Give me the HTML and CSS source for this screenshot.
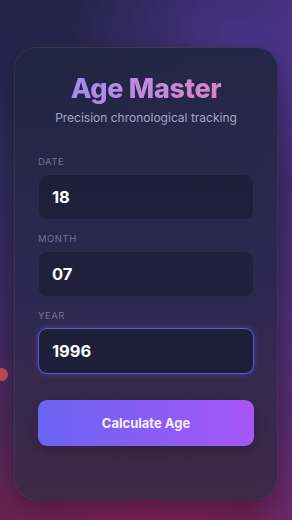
FILE: index.html
```html
<!DOCTYPE html>
<html>
<head>
<meta charset="utf-8">
<link rel="stylesheet" href="styles.css">
</head>
<body>
<div class="dot"></div>
<main class="page">
  <section class="card">
    <h1 class="title">Age Master</h1>
    <p class="subtitle">Precision chronological tracking</p>
    <div class="fields">
      <label class="field">
        <span class="label">Date</span>
        <span class="input">18</span>
      </label>
      <label class="field">
        <span class="label">Month</span>
        <span class="input">07</span>
      </label>
      <label class="field">
        <span class="label">Year</span>
        <span class="input focused">1996</span>
      </label>
    </div>
    <button class="btn">Calculate Age</button>
  </section>
</main>
</body>
</html>
```
FILE: styles.css
```css
html, body { margin: 0; padding: 0; }
body {
  width: 292px;
  height: 520px;
  overflow: hidden;
  position: relative;
  font-family: Inter, "Noto Sans", sans-serif;
  background:
    radial-gradient(ellipse 170px 150px at 240px 40px, rgba(92,64,176,0.6), transparent),
    linear-gradient(90deg, transparent 85%, rgba(110,50,160,0.35) 100%),
    radial-gradient(ellipse 240px 160px at 150px 550px, rgba(130,30,85,0.9), transparent),
    linear-gradient(180deg, #262348 0%, #2e2958 35%, #3a2a60 60%, #58264f 100%);
}
.dot {
  position: absolute;
  left: -5px;
  top: 368px;
  width: 13px;
  height: 13px;
  border-radius: 50%;
  background: #b44a4a;
}
.page {
  padding: 47px 14px 0;
}
.card {
  height: 453px;
  box-sizing: border-box;
  border-radius: 22px;
  background: linear-gradient(180deg, rgba(33,38,66,0.92) 0%, rgba(44,40,78,0.85) 55%, rgba(58,42,70,0.9) 100%);
  border: 1px solid rgba(255,255,255,0.05);
  box-shadow: 0 8px 24px rgba(0,0,0,0.25);
  padding: 26px 23px 0;
  display: flex;
  flex-direction: column;
}
.title {
  margin: 0;
  text-align: center;
  font-size: 27px;
  font-weight: 800;
  line-height: 30px;
  letter-spacing: -0.3px;
  background: linear-gradient(90deg, #9b8cf0 0%, #c08ae0 50%, #e880b8 100%);
  -webkit-background-clip: text;
  background-clip: text;
  color: transparent;
}
.subtitle {
  margin: 6px 0 0;
  text-align: center;
  font-size: 12px;
  color: #a3a6c6;
  line-height: 16px;
}
.fields {
  margin-top: 29px;
  display: flex;
  flex-direction: column;
  gap: 12px;
}
.field {
  display: flex;
  flex-direction: column;
  gap: 6px;
}
.label {
  font-size: 9.5px;
  letter-spacing: 0.5px;
  text-transform: uppercase;
  color: #6f7392;
  line-height: 13px;
}
.input {
  height: 46px;
  box-sizing: border-box;
  border-radius: 9px;
  background: rgba(28,30,54,0.75);
  border: 1px solid rgba(255,255,255,0.05);
  display: flex;
  align-items: center;
  padding-left: 13px;
  font-size: 16.5px;
  font-weight: 700;
  color: #ffffff;
}
.input.focused {
  background: #1f1f3a;
  border: 1.5px solid #5d5bd0;
  box-shadow: 0 0 6px rgba(99,102,241,0.45);
}
.btn {
  margin-top: 26px;
  height: 46px;
  border: none;
  border-radius: 9px;
  background: linear-gradient(90deg, #6a64f2 0%, #8b5cf6 55%, #a855f7 100%);
  color: #f4f0ff;
  font-family: Inter, "Noto Sans", sans-serif;
  font-size: 13px;
  font-weight: 700;
  box-shadow: 0 6px 14px rgba(0,0,0,0.2);
}
```
